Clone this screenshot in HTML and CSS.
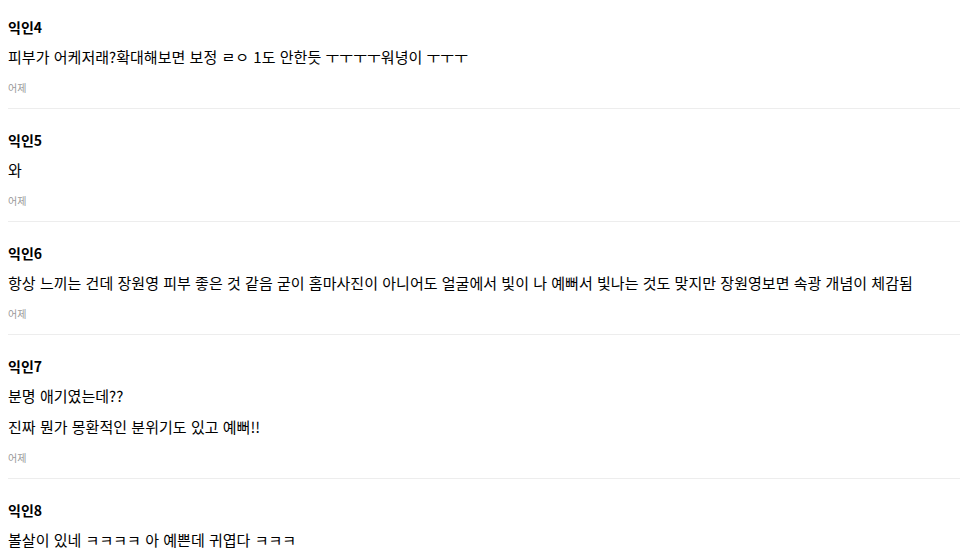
FILE: index.html
```html
<!DOCTYPE html>
<html lang="ko">
<head>
<meta charset="utf-8">
<link rel="stylesheet" href="styles.css">
</head>
<body>
<ul class="comments">
  <li class="comment">
    <div class="name">익인4</div>
    <div class="text">피부가 어케저래?확대해보면 보정 ㄹㅇ 1도 안한듯 ㅜㅜㅜㅜ워녕이 ㅜㅜㅜ</div>
    <div class="date">어제</div>
  </li>
  <li class="comment">
    <div class="name">익인5</div>
    <div class="text">와</div>
    <div class="date">어제</div>
  </li>
  <li class="comment">
    <div class="name">익인6</div>
    <div class="text">항상 느끼는 건데 장원영 피부 좋은 것 같음 굳이 홈마사진이 아니어도 얼굴에서 빛이 나 예뻐서 빛나는 것도 맞지만 장원영보면 속광 개념이 체감됨</div>
    <div class="date">어제</div>
  </li>
  <li class="comment">
    <div class="name">익인7</div>
    <div class="text">분명 애기였는데??<br>진짜 뭔가 몽환적인 분위기도 있고 예뻐!!</div>
    <div class="date">어제</div>
  </li>
  <li class="comment">
    <div class="name">익인8</div>
    <div class="text">볼살이 있네 ㅋㅋㅋㅋ 아 예쁜데 귀엽다 ㅋㅋㅋ</div>
    <div class="date">어제</div>
  </li>
</ul>
</body>
</html>
```

FILE: styles.css
```css
html, body {
  margin: 0;
  padding: 0;
  background: #fff;
}
body {
  padding-left: 8px;
  font-family: "Noto Sans CJK KR", "Noto Sans", sans-serif;
  color: #000;
  overflow: hidden;
}
.comments {
  list-style: none;
  margin: 0;
  padding: 0;
}
.comment {
  padding: 21px 0 13px;
  border-bottom: 1px solid #ededed;
}
.comment:first-child {
  padding-top: 17px;
}
.name {
  font-size: 14px;
  line-height: 20px;
  font-weight: 700;
  color: #000;
}
.text {
  margin-top: 4px;
  font-size: 15px;
  line-height: 31px;
  letter-spacing: 0.03px;
  color: #000;
}
.date {
  margin-top: 9px;
  font-size: 10px;
  line-height: 14px;
  color: #999;
}
```
